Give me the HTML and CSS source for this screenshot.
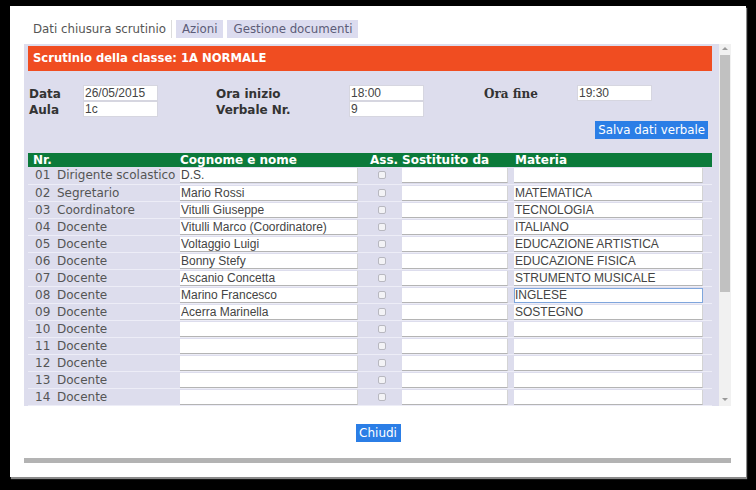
FILE: index.html
```html
<!DOCTYPE html>
<html lang="it">
<head>
<meta charset="utf-8">
<title>Scrutinio</title>
<link rel="stylesheet" href="styles.css">
</head>
<body>
<div class="panel">
  <div class="tabs">
    <span class="tab active">Dati chiusura scrutinio</span>
    <span class="tab">Azioni</span>
    <span class="tab">Gestione documenti</span>
  </div>
  <div class="viewport">
    <div class="content">
      <div class="title">Scrutinio della classe: 1A NORMALE</div>
      <div class="form">
        <span class="lbl">Data</span><input class="fld" value="26/05/2015"><span></span>
        <span class="lbl">Ora inizio</span><input class="fld" value="18:00"><span></span>
        <span class="lbl serif">Ora fine</span><input class="fld" value="19:30">
        <span class="lbl">Aula</span><input class="fld" value="1c"><span></span>
        <span class="lbl">Verbale Nr.</span><input class="fld" value="9">
      </div>
      <div class="save-row"><button class="btn">Salva dati verbale</button></div>
      <table class="members">
        <colgroup>
          <col class="c-nr"><col class="c-role"><col class="c-name"><col class="c-ass"><col class="c-sost"><col class="c-mat"><col class="c-end">
        </colgroup>
        <thead>
          <tr><th class="h-nr" colspan="2">Nr.</th><th class="h-name">Cognome e nome</th><th class="h-ass">Ass.</th><th class="h-sost">Sostituito da</th><th class="h-mat">Materia</th><th></th></tr>
        </thead>
        <tbody>
          <tr><td class="nr">01</td><td class="role">Dirigente scolastico</td><td class="in"><input class="cell" value="D.S."></td><td class="ass"><input type="checkbox" class="chk"></td><td class="in"><input class="cell"></td><td class="in mat"><input class="cell" value=""></td><td></td></tr>
          <tr><td class="nr">02</td><td class="role">Segretario</td><td class="in"><input class="cell" value="Mario Rossi"></td><td class="ass"><input type="checkbox" class="chk"></td><td class="in"><input class="cell"></td><td class="in mat"><input class="cell" value="MATEMATICA"></td><td></td></tr>
          <tr><td class="nr">03</td><td class="role">Coordinatore</td><td class="in"><input class="cell" value="Vitulli Giuseppe"></td><td class="ass"><input type="checkbox" class="chk"></td><td class="in"><input class="cell"></td><td class="in mat"><input class="cell" value="TECNOLOGIA"></td><td></td></tr>
          <tr><td class="nr">04</td><td class="role">Docente</td><td class="in"><input class="cell" value="Vitulli Marco (Coordinatore)"></td><td class="ass"><input type="checkbox" class="chk"></td><td class="in"><input class="cell"></td><td class="in mat"><input class="cell" value="ITALIANO"></td><td></td></tr>
          <tr><td class="nr">05</td><td class="role">Docente</td><td class="in"><input class="cell" value="Voltaggio Luigi"></td><td class="ass"><input type="checkbox" class="chk"></td><td class="in"><input class="cell"></td><td class="in mat"><input class="cell" value="EDUCAZIONE ARTISTICA"></td><td></td></tr>
          <tr><td class="nr">06</td><td class="role">Docente</td><td class="in"><input class="cell" value="Bonny Stefy"></td><td class="ass"><input type="checkbox" class="chk"></td><td class="in"><input class="cell"></td><td class="in mat"><input class="cell" value="EDUCAZIONE FISICA"></td><td></td></tr>
          <tr><td class="nr">07</td><td class="role">Docente</td><td class="in"><input class="cell" value="Ascanio Concetta"></td><td class="ass"><input type="checkbox" class="chk"></td><td class="in"><input class="cell"></td><td class="in mat"><input class="cell" value="STRUMENTO MUSICALE"></td><td></td></tr>
          <tr><td class="nr">08</td><td class="role">Docente</td><td class="in"><input class="cell" value="Marino Francesco"></td><td class="ass"><input type="checkbox" class="chk"></td><td class="in"><input class="cell"></td><td class="in mat"><input class="cell focus" value="INGLESE"></td><td></td></tr>
          <tr><td class="nr">09</td><td class="role">Docente</td><td class="in"><input class="cell" value="Acerra Marinella"></td><td class="ass"><input type="checkbox" class="chk"></td><td class="in"><input class="cell"></td><td class="in mat"><input class="cell" value="SOSTEGNO"></td><td></td></tr>
          <tr><td class="nr">10</td><td class="role">Docente</td><td class="in"><input class="cell"></td><td class="ass"><input type="checkbox" class="chk"></td><td class="in"><input class="cell"></td><td class="in mat"><input class="cell"></td><td></td></tr>
          <tr><td class="nr">11</td><td class="role">Docente</td><td class="in"><input class="cell"></td><td class="ass"><input type="checkbox" class="chk"></td><td class="in"><input class="cell"></td><td class="in mat"><input class="cell"></td><td></td></tr>
          <tr><td class="nr">12</td><td class="role">Docente</td><td class="in"><input class="cell"></td><td class="ass"><input type="checkbox" class="chk"></td><td class="in"><input class="cell"></td><td class="in mat"><input class="cell"></td><td></td></tr>
          <tr><td class="nr">13</td><td class="role">Docente</td><td class="in"><input class="cell"></td><td class="ass"><input type="checkbox" class="chk"></td><td class="in"><input class="cell"></td><td class="in mat"><input class="cell"></td><td></td></tr>
          <tr><td class="nr">14</td><td class="role">Docente</td><td class="in"><input class="cell"></td><td class="ass"><input type="checkbox" class="chk"></td><td class="in"><input class="cell"></td><td class="in mat"><input class="cell"></td><td></td></tr>
        </tbody>
      </table>
    </div>
    <div class="vscroll">
      <span class="arrow up"></span>
      <span class="thumb"></span>
      <span class="arrow down"></span>
    </div>
  </div>
  <div class="footer"><button class="btn close">Chiudi</button></div>
  <div class="bar"></div>
</div>
</body>
</html>
```
FILE: styles.css
```css
* { box-sizing: border-box; }
html, body { margin: 0; padding: 0; }
body {
  background: #000;
  width: 756px;
  height: 490px;
  overflow: hidden;
  font-family: "DejaVu Sans", Verdana, sans-serif;
  font-size: 12px;
  color: #555;
}
.panel {
  margin: 6px 0 0 10px;
  width: 736px;
  height: 471px;
  background: #fff;
  padding: 14px 15px 0 14px;
  box-shadow: 1px 2px 1px #8a8a8a;
}
.tabs {
  display: flex;
  gap: 4px;
  margin-left: 3px;
  height: 18px;
}
.tab {
  padding: 0 6px;
  line-height: 18px;
  font-size: 11.8px;
  color: #5c5c78;
  background: #dcdcef;
  white-space: nowrap;
}
.tab.active {
  background: #fff;
  color: #555;
  padding-right: 5px;
  border-right: 1px solid #dcdcdc;
}
.viewport {
  margin-top: 6px;
  width: 707px;
  height: 362px;
  display: flex;
  background: #dddded;
}
.content {
  flex: 1;
  min-width: 0;
  overflow: hidden;
  padding: 2px 7px 0 4px;
}
.vscroll {
  width: 12px;
  display: flex;
  flex-direction: column;
  align-items: center;
  background: #f1f1f1;
  padding: 0 1px;
}
.arrow {
  width: 0;
  height: 0;
  border-left: 3px solid transparent;
  border-right: 3px solid transparent;
}
.arrow.up {
  margin-top: 3px;
  border-bottom: 3px solid #999;
}
.arrow.down {
  margin-top: auto;
  margin-bottom: 5px;
  border-top: 3px solid #999;
}
.thumb {
  margin-top: 5px;
  width: 10px;
  height: 237px;
  background: #c1c1c1;
}
.title {
  height: 25px;
  background: #f04d21;
  color: #fff;
  font-weight: bold;
  font-size: 11.6px;
  line-height: 25px;
  padding-left: 5px;
}
.form {
  margin: 14px 0 0 1px;
  display: grid;
  grid-template-columns: 54px 75px 58px 133px 75px 60px 93px 75px;
  grid-auto-rows: 16px;
}
.lbl {
  font-weight: bold;
  color: #333;
  font-size: 12px;
  line-height: 16px;
  padding-top: 1px;
}
.lbl.serif { font-family: "DejaVu Serif", Georgia, serif; font-size: 12px; }
.fld {
  width: 75px;
  height: 16px;
  border: 1px solid #d6d6e0;
  background: #fff;
  font-family: "Liberation Sans", Arial, sans-serif;
  font-size: 12px;
  color: #444;
  padding: 0 1px;
  margin: 0;
  outline: none;
}
.save-row {
  margin-top: 4px;
  display: flex;
  justify-content: flex-end;
  padding-right: 4px;
}
.btn {
  height: 18px;
  background: #2b7ee6;
  color: #fff;
  border: 0;
  font-family: "DejaVu Sans", Verdana, sans-serif;
  font-size: 11.8px;
  padding: 0 3px;
  margin: 0;
  line-height: 18px;
}
.members {
  margin-top: 14px;
  width: 684px;
  table-layout: fixed;
  border-collapse: collapse;
}
.c-nr { width: 26px; }
.c-role { width: 124px; }
.c-name { width: 182px; }
.c-ass { width: 40px; }
.c-sost { width: 110px; }
.c-mat { width: 195px; }
.c-end { width: 7px; }
.members thead tr { background: #0b7a3a; height: 14px; }
.members th {
  color: #fff;
  font-weight: bold;
  font-size: 12px;
  line-height: 14px;
  height: 14px;
  text-align: left;
  padding: 0;
  white-space: nowrap;
  overflow: hidden;
}
.h-nr { padding-left: 5px !important; }
.h-name { padding-left: 2px !important; }
.h-ass { padding-left: 10px !important; }
.h-sost { padding-left: 2px !important; }
.h-mat { padding-left: 5px !important; }
.members tbody tr { height: 17px; border-bottom: 1px solid #ededf7; }
.members td {
  padding: 0;
  height: 16px;
  font-size: 12px;
  line-height: 16px;
  color: #555;
  white-space: nowrap;
  overflow: hidden;
  vertical-align: top;
}
.nr { padding-left: 7px !important; }
.role { padding-left: 3px !important; }
.in { padding: 1px 2px 0 !important; }
.in.mat { padding-left: 4px !important; }
.cell {
  display: block;
  width: 100%;
  height: 15px;
  margin: 0;
  border: 0;
  border-bottom: 1px solid #b4b4b4;
  border-right: 1px solid #d4d4d4;
  background: #fff;
  font-family: "Liberation Sans", Arial, sans-serif;
  font-size: 12px;
  color: #444;
  padding: 0 1px;
  outline: none;
}
.cell.focus { border: 1px solid #7fa6dc; padding: 0; }
.ass { line-height: 0 !important; padding: 4px 0 0 3px !important; }
.chk {
  appearance: none;
  -webkit-appearance: none;
  display: block;
  width: 8px;
  height: 8px;
  margin: 0 auto;
  border: 1px solid #b8b8c0;
  border-radius: 2px;
  background: #f3f3f6;
}
.footer {
  margin-top: 18px;
  display: flex;
  justify-content: center;
  padding-left: 1px;
}
.btn.close { width: 45px; padding: 0; font-size: 12px; }
.bar {
  margin-top: 16px;
  width: 707px;
  height: 5px;
  background: #b3b3b3;
}
```
